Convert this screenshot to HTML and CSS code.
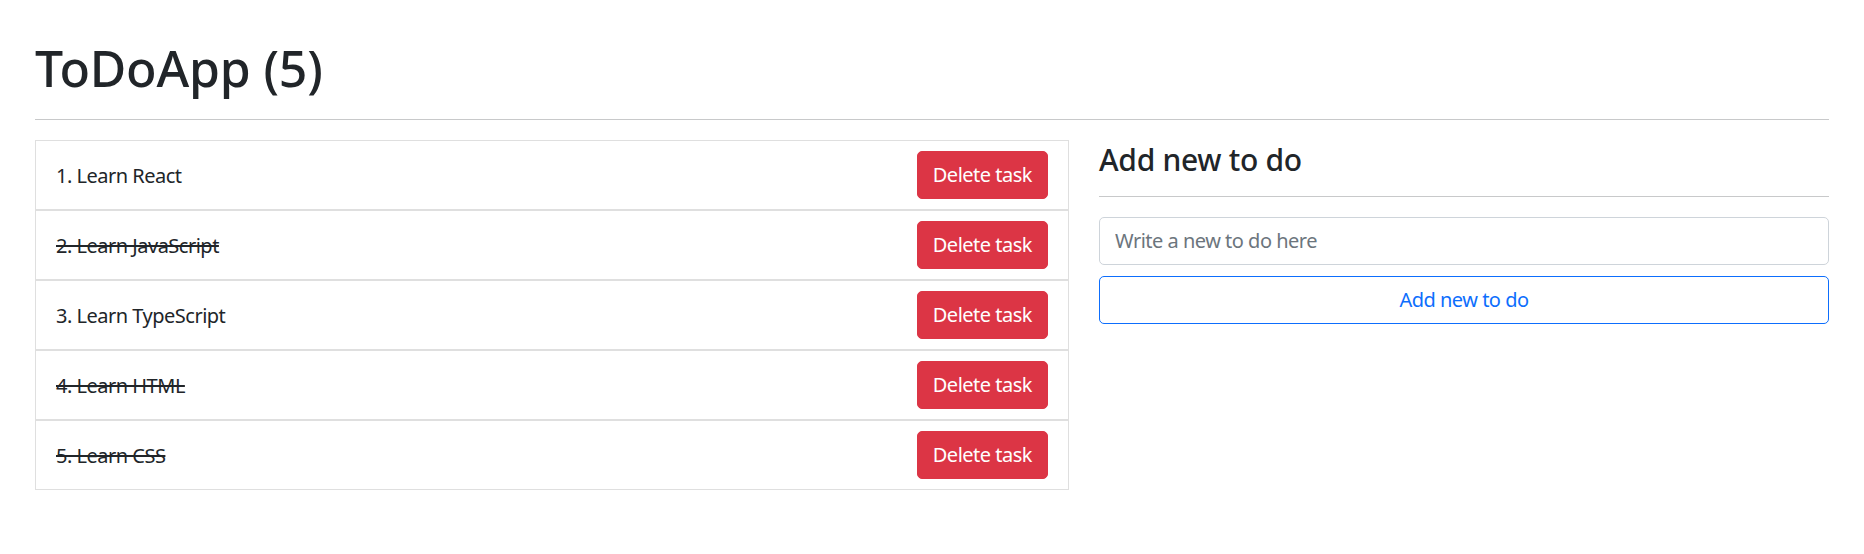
FILE: index.html
```html
<!DOCTYPE html>
<html lang="en">
<head>
<meta charset="utf-8">
<title>ToDoApp</title>
<link rel="stylesheet" href="styles.css">
</head>
<body>
<div class="page">
  <h1 class="title">ToDoApp (5)</h1>
  <hr class="rule">
  <div class="columns">
    <ul class="todo-list">
      <li class="todo-item"><span class="todo-text">1. Learn React</span><button class="btn btn-danger">Delete task</button></li>
      <li class="todo-item"><span class="todo-text done">2. Learn JavaScript</span><button class="btn btn-danger">Delete task</button></li>
      <li class="todo-item"><span class="todo-text">3. Learn TypeScript</span><button class="btn btn-danger">Delete task</button></li>
      <li class="todo-item"><span class="todo-text done">4. Learn HTML</span><button class="btn btn-danger">Delete task</button></li>
      <li class="todo-item"><span class="todo-text done">5. Learn CSS</span><button class="btn btn-danger">Delete task</button></li>
    </ul>
    <div class="add-panel">
      <h4 class="panel-title">Add new to do</h4>
      <hr class="rule panel-rule">
      <input class="form-control" type="text" placeholder="Write a new to do here">
      <button class="btn btn-outline">Add new to do</button>
    </div>
  </div>
</div>
</body>
</html>
```
FILE: styles.css
```css
* { box-sizing: border-box; }
html, body { margin: 0; padding: 0; background: #fff; }
body {
  font-family: "Noto Sans", "Open Sans", sans-serif;
  font-size: 20px;
  line-height: 1.5;
  color: #212529;
  letter-spacing: -0.5px;
}
.page {
  padding: 38px 35px 0 35px;
}
.title {
  margin: 0;
  font-size: 50px;
  font-weight: 500;
  line-height: 60px;
  letter-spacing: -0.2px;
}
.rule {
  margin: 21px 0 20px 0;
  border: 0;
  border-top: 1px solid #c8c9ca;
  height: 0;
}
.columns {
  display: grid;
  grid-template-columns: 1034px 730px;
  column-gap: 30px;
  align-items: start;
}
.todo-list {
  list-style: none;
  margin: 0;
  padding: 0;
}
.todo-item {
  display: flex;
  align-items: center;
  justify-content: space-between;
  border: 1px solid #dfdfdf;
  padding: 10px 20px;
  min-height: 70px;
}
.todo-text { padding-top: 1px; }
.todo-text.done { text-decoration: line-through; }
.btn {
  font-family: inherit;
  font-size: 20px;
  line-height: 1.5;
  letter-spacing: -0.5px;
  border-radius: 5px;
  padding: 7.5px 15px;
  height: 48px;
  cursor: pointer;
}
.btn-danger {
  background: #dc3545;
  border: 1px solid #dc3545;
  color: #fff;
}
.panel-title {
  margin: 0;
  padding-top: 2px;
  font-size: 30px;
  font-weight: 500;
  line-height: 36px;
  letter-spacing: -0.3px;
}
.panel-rule {
  margin: 18px 0 20px 0;
}
.form-control {
  display: block;
  width: 100%;
  height: 47.5px;
  font-family: inherit;
  font-size: 20px;
  letter-spacing: -0.5px;
  padding: 7.5px 15px;
  border: 1px solid #ced4da;
  border-radius: 5px;
  color: #212529;
}
.form-control::placeholder { color: #6c757d; }
.btn-outline {
  display: block;
  width: 100%;
  margin-top: 11px;
  background: #fff;
  border: 1px solid #0d6efd;
  color: #0d6efd;
}
```
